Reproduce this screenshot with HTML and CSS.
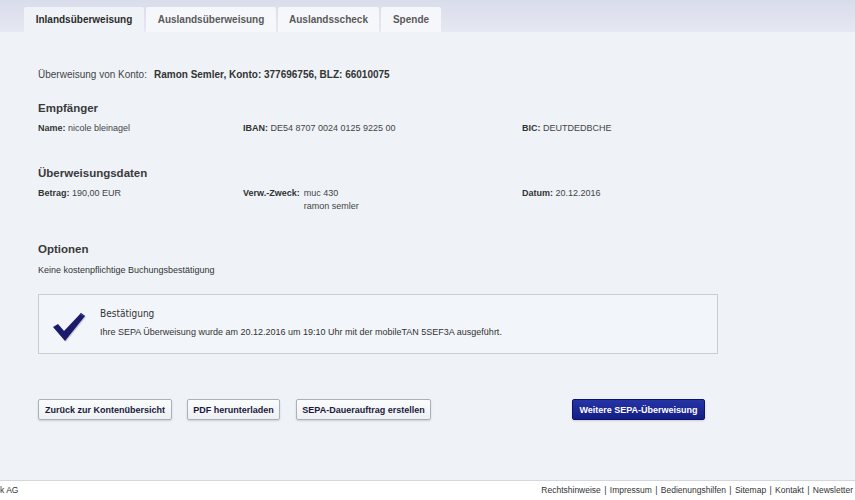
FILE: index.html
```html
<!DOCTYPE html>
<html lang="de">
<head>
    <meta charset="UTF-8">
    <meta name="viewport" content="width=device-width, initial-scale=1.0">
    <title>Inlandsüberweisung - Bestätigung</title>
    <link rel="stylesheet" href="styles.css">
</head>
<body>
    <div class="tabbar">
        <ul class="tabs">
            <li class="tab active">Inlandsüberweisung</li>
            <li class="tab">Auslandsüberweisung</li>
            <li class="tab">Auslandsscheck</li>
            <li class="tab">Spende</li>
        </ul>
    </div>

    <div class="content">
        <p class="from">Überweisung von Konto:<b>Ramon Semler, Konto: 377696756, BLZ: 66010075</b></p>

        <h2>Empfänger</h2>
        <div class="row">
            <div class="cell"><b>Name:</b> nicole bleinagel</div>
            <div class="cell"><b>IBAN:</b> DE54 8707 0024 0125 9225 00</div>
            <div class="cell"><b>BIC:</b> DEUTDEDBCHE</div>
        </div>

        <h2>Überweisungsdaten</h2>
        <div class="row">
            <div class="cell"><b>Betrag:</b> 190,00 EUR</div>
            <div class="cell pair"><b>Verw.-Zweck:</b><span>muc 430<br>ramon semler</span></div>
            <div class="cell"><b>Datum:</b> 20.12.2016</div>
        </div>

        <h2 class="opt">Optionen</h2>
        <p class="line">Keine kostenpflichtige Buchungsbestätigung</p>

        <div class="confirm">
            <svg class="check" width="34" height="32" viewBox="0 0 34 32">
                <path d="M1 17 L6 14 L12 21 L29 3 L33 6 L13 31 Z" fill="#c9cdd8" transform="translate(1,1)"/>
                <path d="M1 17 L6 14 L12 21 L29 3 L33 6 L13 31 Z" fill="#1c1a6b"/>
                <path d="M29 3 L33 6 L31 6 L27.5 4.6 Z" fill="#3a3a95"/>
            </svg>
            <div class="confirm-text">
                <div class="confirm-title">Bestätigung</div>
                <div class="line">Ihre SEPA Überweisung wurde am 20.12.2016 um 19:10 Uhr mit der mobileTAN 5SEF3A ausgeführt.</div>
            </div>
        </div>

        <div class="buttons">
            <button class="btn back">Zurück zur Kontenübersicht</button>
            <button class="btn pdf">PDF herunterladen</button>
            <button class="btn dauer">SEPA-Dauerauftrag erstellen</button>
            <button class="btn primary">Weitere SEPA-Überweisung</button>
        </div>
    </div>

    <div class="footer">
        <span>k AG</span>
        <span class="links">Rechtshinweise <i>|</i> Impressum <i>|</i> Bedienungshilfen <i>|</i> Sitemap <i>|</i> Kontakt <i>|</i> Newsletter</span>
    </div>
</body>
</html>
```

FILE: styles.css
```css
*{
    margin: 0;
    padding: 0;
    box-sizing: border-box;
}

body{
    font-family: "Liberation Sans", Arial, sans-serif;
    font-size: 9px;
    line-height: 13px;
    color: #333;
    background-color: #eff3f8;
    width: 855px;
    height: 500px;
    overflow: hidden;
}

b{
    color: #333;
}

.tabbar{
    height: 32px;
    background: linear-gradient(#d9dcea, #e6e9f2);
    padding-left: 24px;
    padding-top: 7px;
}

.tabs{
    list-style: none;
    display: flex;
    gap: 2px;
}

.tab{
    height: 25px;
    line-height: 25px;
    background-color: #f6f7fa;
    color: #5a5a5a;
    font-weight: bold;
    font-size: 10px;
    text-align: center;
    border-top-left-radius: 2px;
    border-top-right-radius: 2px;
}

.tab.active{
    background-color: #eff3f8;
    color: #2b2b2b;
    width: 120px;
}

.tab:nth-child(2){
    width: 130px;
}

.tab:nth-child(3){
    width: 101px;
}

.tab:nth-child(4){
    width: 60px;
}

.content{
    padding: 36px 0 0 38px;
    height: 448px;
}

.from{
    font-size: 10px;
    color: #444;
}

.from b{
    margin-left: 7px;
}

h2{
    font-size: 11.5px;
    line-height: 16px;
    font-weight: bold;
    color: #3a3a3a;
    margin-top: 19px;
    margin-bottom: 6px;
}

.row + h2{
    margin-top: 30px;
}

h2.opt{
    margin-top: 28px;
    margin-bottom: 7px;
}

.row{
    display: grid;
    grid-template-columns: 205px 279px 200px;
}

.cell{
    color: #444;
}

.pair{
    display: flex;
    gap: 4px;
}

.confirm{
    margin-top: 17px;
    width: 680px;
    height: 60px;
    border: 1px solid #c9cdd3;
    background-color: #f2f5f9;
    display: flex;
    align-items: flex-start;
    padding: 14px 0 0 13px;
}

.check{
    margin-top: 1px;
}

.confirm-text{
    margin-left: 14px;
    margin-top: -2px;
}

.confirm-title{
    font-family: "DejaVu Sans Condensed", "DejaVu Sans", sans-serif;
    font-size: 10px;
    color: #333;
    margin-bottom: 6px;
}

.buttons{
    margin-top: 45px;
    width: 667px;
    display: flex;
    align-items: center;
    gap: 15px;
}

.btn{
    font-family: "Liberation Sans", Arial, sans-serif;
    font-size: 9px;
    font-weight: bold;
    color: #1a1a3a;
    height: 21px;
    padding: 0;
    background: linear-gradient(#fbfcfd, #edf0f4);
    border: 1px solid #a9b1bd;
    border-radius: 2px;
    box-shadow: 0 1px 2px rgba(0,0,0,0.15);
    cursor: pointer;
}

.back{
    width: 134px;
}

.pdf{
    width: 93px;
}

.dauer{
    width: 135px;
    margin-left: 1px;
}

.btn.primary{
    width: 133px;
    margin-left: auto;
    color: #fff;
    background: linear-gradient(#2534a6, #141d86);
    border: 1px solid #0e1463;
}

.footer{
    border-top: 1px solid #d3d6dc;
    background-color: #fff;
    height: 20px;
    display: flex;
    justify-content: space-between;
    align-items: center;
    padding: 0 2px 0 0;
    font-size: 8.5px;
    color: #333;
}

.footer i{
    font-style: normal;
    margin: 0 1px;
}
```
